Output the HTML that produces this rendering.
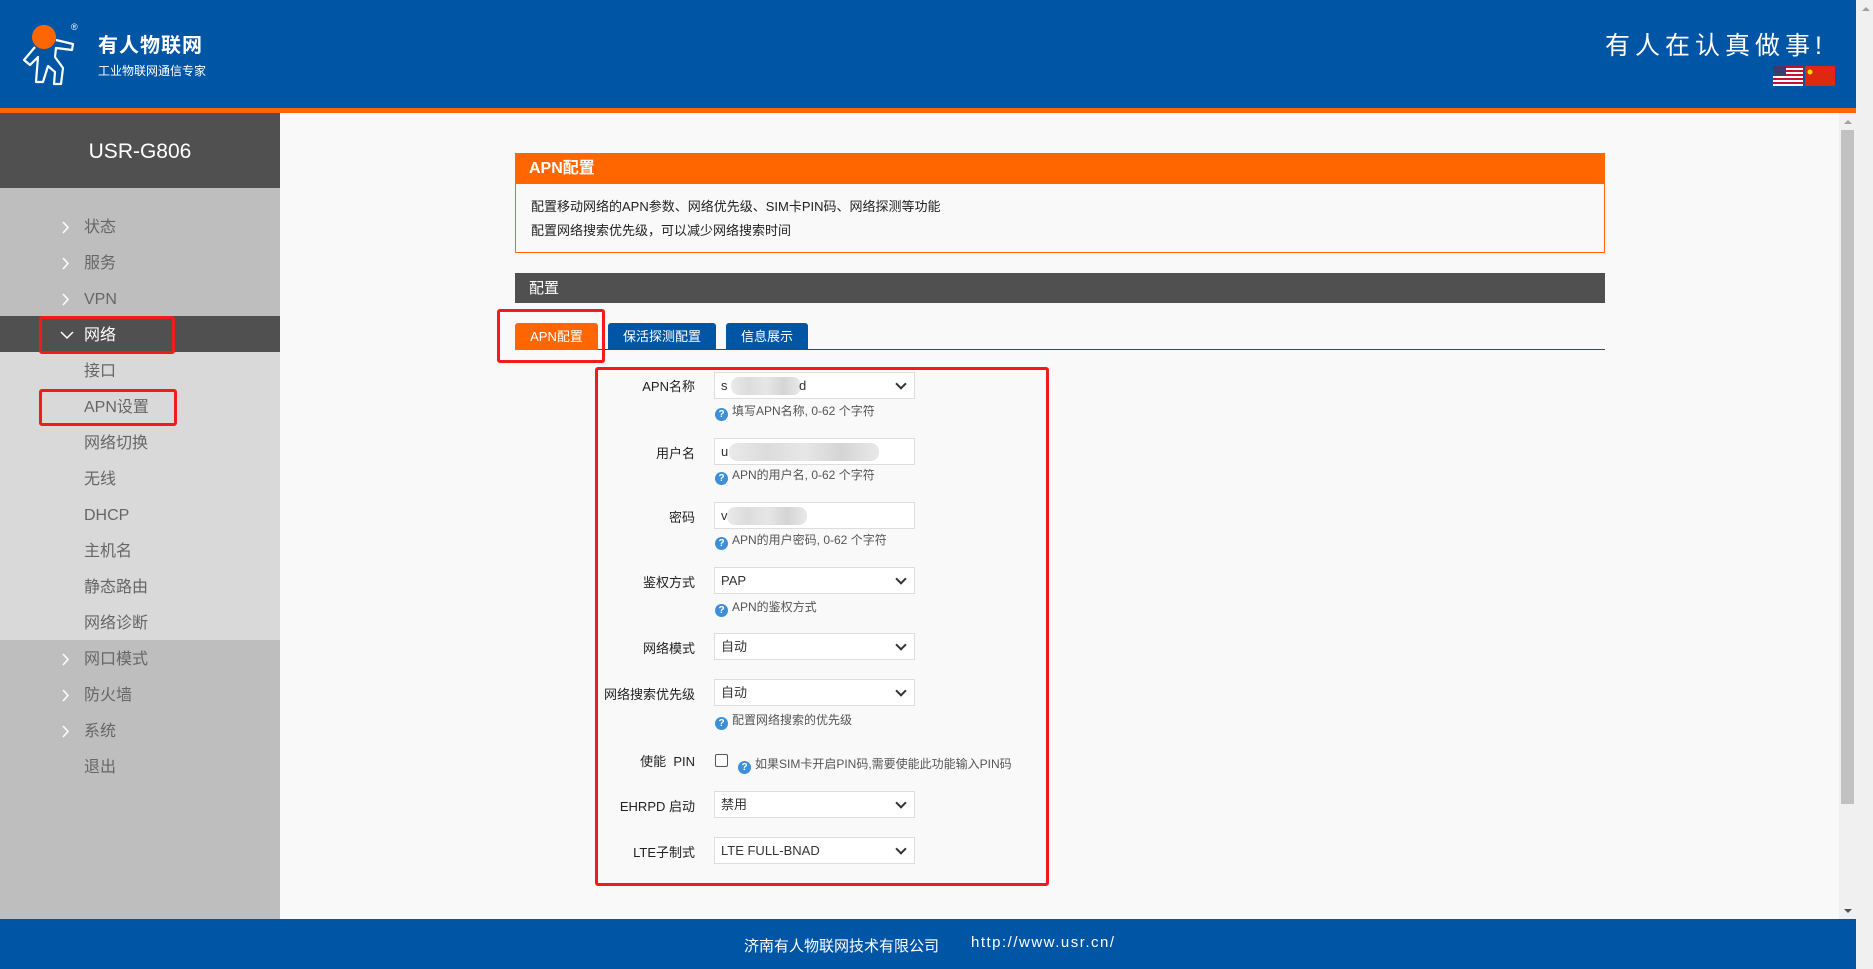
<!DOCTYPE html>
<html><head><meta charset="utf-8"><style>
*{margin:0;padding:0;box-sizing:border-box}
body{width:1873px;height:969px;position:relative;overflow:hidden;background:#f9f9f9;font-family:"Liberation Sans","Noto Sans CJK SC",sans-serif;}
.a{position:absolute}
#hdr{left:0;top:0;width:1856px;height:108px;background:#0055a5}
#ob{left:0;top:108px;width:1856px;height:5px;background:#ff6600}
#side{left:0;top:113px;width:280px;height:806px;background:#bebebe}
#stop{left:0;top:113px;width:280px;height:75px;background:#505050;color:#fff;font-size:21px;text-align:center;line-height:78px}
.mi{position:absolute;left:0;width:280px;height:36px;line-height:40px;font-size:16px;color:#666;padding-left:84px}
.mi svg{position:absolute;left:62px;top:13px}
.red{position:absolute;border:3px solid #f21a1a;border-radius:3px}
#foot{left:0;top:919px;width:1856px;height:50px;background:#0055a5;color:#fff;font-size:15px}
.lbl{position:absolute;right:1178px;font-size:13px;color:#222;text-align:right;white-space:nowrap}
.inp{position:absolute;left:714px;width:201px;height:27px;background:#fff;border:1px solid #ddd;font-size:13px;color:#333;padding-left:6px;line-height:25px}
.inp.s::after{content:"";position:absolute;right:9px;top:7px;width:6px;height:6px;border-right:2px solid #333;border-bottom:2px solid #333;transform:rotate(45deg)}
.hp{position:absolute;font-size:12px;color:#555;white-space:nowrap}
.q{display:inline-block;width:13px;height:13px;border-radius:50%;background:#3d8fd8;color:#fff;font-size:10px;line-height:13px;text-align:center;vertical-align:-2px;margin-right:4px;font-weight:bold}
.blur{position:absolute;top:4px;height:18px;background:linear-gradient(90deg,#e8e8e8,#d8d8d8,#e4e4e4,#d0d0d0,#e6e6e6);border-radius:8px;opacity:.9}
</style></head><body>
<div class="a" id="hdr"></div>
<div class="a" id="ob"></div>
<svg class="a" style="left:20px;top:20px" width="66" height="70" viewBox="0 0 66 70">
<circle cx="24" cy="17" r="12" fill="#ff6600"/>
<path d="M15 27 L4 40 L10 45 L18 37 L16 62 L23 62 L28 46 L35 52 L34 64 L41 64 L43 48 L35 37 L36 28 L52 30 L53 24 L36 20" fill="none" stroke="#fff" stroke-width="2.2" stroke-linejoin="round"/>
<text x="51" y="10" fill="#fff" font-size="9" font-family="Liberation Sans">®</text>
</svg>
<div class="a" style="left:98px;top:29px;color:#fff;font-size:20px;font-weight:bold;letter-spacing:1px">有人物联网</div>
<div class="a" style="left:98px;top:62px;color:#fff;font-size:12px">工业物联网通信专家</div>
<div class="a" style="left:1605px;top:26px;color:#fff;font-size:25px;letter-spacing:5px">有人在认真做事!</div>
<svg class="a" style="left:1773px;top:66px" width="62" height="20">
<rect x="0" y="0" width="30" height="20" fill="#fff"/>
<g fill="#c8102e"><rect y="0" width="30" height="2"/><rect y="4" width="30" height="2"/><rect y="8" width="30" height="2"/><rect y="12" width="30" height="2"/><rect y="16" width="30" height="2"/></g>
<rect x="0" y="0" width="13" height="10" fill="#3c3b6e"/>
<rect x="32" y="0" width="30" height="20" fill="#de2910"/>
<circle cx="37" cy="6" r="2.5" fill="#ffde00"/>
</svg>
<div class="a" style="left:1856px;top:0;width:17px;height:969px;background:#f0f0f0"></div>
<div class="a" style="left:1862px;top:7px;border-left:4px solid transparent;border-right:4px solid transparent;border-bottom:4px solid #a0a0a0"></div>
<div class="a" style="left:1839px;top:113px;width:17px;height:806px;background:#f0f0f0"></div>
<div class="a" style="left:1841px;top:130px;width:13px;height:674px;background:#c1c1c1"></div>
<div class="a" style="left:1844px;top:120px;border-left:4px solid transparent;border-right:4px solid transparent;border-bottom:4px solid #a0a0a0"></div>
<div class="a" style="left:1844px;top:909px;border-left:4px solid transparent;border-right:4px solid transparent;border-top:4px solid #505050"></div>
<div class="a" id="side"></div>
<div class="a" id="stop">USR-G806</div>
<div class="a" style="left:0;top:352px;width:280px;height:288px;background:#d9d9d9"></div>
<div class="a" style="left:0;top:316px;width:280px;height:36px;background:#505050"></div>
<div class="mi" style="top:208px"><svg width="8" height="13"><path d="M1 1 L6 6.5 L1 12" fill="none" stroke="#fff" stroke-width="1.5"/></svg>状态</div>
<div class="mi" style="top:244px"><svg width="8" height="13"><path d="M1 1 L6 6.5 L1 12" fill="none" stroke="#fff" stroke-width="1.5"/></svg>服务</div>
<div class="mi" style="top:280px"><svg width="8" height="13"><path d="M1 1 L6 6.5 L1 12" fill="none" stroke="#fff" stroke-width="1.5"/></svg>VPN</div>
<div class="mi" style="top:316px;color:#fff"><svg width="14" height="9" style="left:60px;top:15px"><path d="M1 1 L7 7 L13 1" fill="none" stroke="#fff" stroke-width="1.5"/></svg>网络</div>
<div class="mi" style="top:352px">接口</div>
<div class="mi" style="top:388px">APN设置</div>
<div class="mi" style="top:424px">网络切换</div>
<div class="mi" style="top:460px">无线</div>
<div class="mi" style="top:496px">DHCP</div>
<div class="mi" style="top:532px">主机名</div>
<div class="mi" style="top:568px">静态路由</div>
<div class="mi" style="top:604px">网络诊断</div>
<div class="mi" style="top:640px"><svg width="8" height="13"><path d="M1 1 L6 6.5 L1 12" fill="none" stroke="#fff" stroke-width="1.5"/></svg>网口模式</div>
<div class="mi" style="top:676px"><svg width="8" height="13"><path d="M1 1 L6 6.5 L1 12" fill="none" stroke="#fff" stroke-width="1.5"/></svg>防火墙</div>
<div class="mi" style="top:712px"><svg width="8" height="13"><path d="M1 1 L6 6.5 L1 12" fill="none" stroke="#fff" stroke-width="1.5"/></svg>系统</div>
<div class="mi" style="top:748px">退出</div>
<div class="red" style="left:39px;top:316px;width:136px;height:38px"></div>
<div class="red" style="left:39px;top:389px;width:138px;height:37px"></div>
<div class="a" style="left:515px;top:153px;width:1090px;height:100px;border:1px solid #ff6600;background:#f9f9f9"></div>
<div class="a" style="left:515px;top:153px;width:1090px;height:31px;background:#ff6600;color:#fff;font-size:16px;font-weight:bold;line-height:31px;padding-left:14px">APN配置</div>
<div class="a" style="left:531px;top:195px;font-size:13px;color:#222;line-height:24px">配置移动网络的APN参数、网络优先级、SIM卡PIN码、网络探测等功能<br>配置网络搜索优先级，可以减少网络搜索时间</div>
<div class="a" style="left:515px;top:273px;width:1090px;height:30px;background:#505050;color:#fff;font-size:15px;line-height:32px;padding-left:14px">配置</div>
<div class="a" style="left:515px;top:349px;width:1090px;height:1px;background:#0055a5"></div>
<div class="a" style="left:515px;top:323px;width:83px;height:27px;background:#ff6600;color:#fff;font-size:13px;text-align:center;line-height:27px;border-radius:3px 3px 0 0">APN配置</div>
<div class="a" style="left:608px;top:323px;width:108px;height:27px;background:#0055a5;color:#fff;font-size:13px;text-align:center;line-height:27px;border-radius:3px 3px 0 0">保活探测配置</div>
<div class="a" style="left:726px;top:323px;width:82px;height:27px;background:#0055a5;color:#fff;font-size:13px;text-align:center;line-height:27px;border-radius:3px 3px 0 0">信息展示</div>
<div class="red" style="left:497px;top:309px;width:108px;height:54px"></div>
<div class="red" style="left:595px;top:367px;width:454px;height:519px"></div>
<div class="lbl" style="top:376px">APN名称</div>
<div class="inp s" style="top:372px">s<div class="blur" style="left:16px;width:70px"></div><span style="position:absolute;left:84px">d</span></div>
<div class="hp" style="left:715px;top:402px"><span class="q">?</span>填写APN名称, 0-62 个字符</div>
<div class="lbl" style="top:443px">用户名</div>
<div class="inp" style="top:438px">u<div class="blur" style="left:14px;width:150px"></div></div>
<div class="hp" style="left:715px;top:466px"><span class="q">?</span>APN的用户名, 0-62 个字符</div>
<div class="lbl" style="top:507px">密码</div>
<div class="inp" style="top:502px">v<div class="blur" style="left:12px;width:80px"></div></div>
<div class="hp" style="left:715px;top:531px"><span class="q">?</span>APN的用户密码, 0-62 个字符</div>
<div class="lbl" style="top:572px">鉴权方式</div>
<div class="inp s" style="top:567px">PAP</div>
<div class="hp" style="left:715px;top:598px"><span class="q">?</span>APN的鉴权方式</div>
<div class="lbl" style="top:638px">网络模式</div>
<div class="inp s" style="top:633px">自动</div>
<div class="lbl" style="top:684px">网络搜索优先级</div>
<div class="inp s" style="top:679px">自动</div>
<div class="hp" style="left:715px;top:711px"><span class="q">?</span>配置网络搜索的优先级</div>
<div class="lbl" style="top:751px">使能&nbsp; PIN</div>
<div class="a" style="left:715px;top:754px;width:13px;height:13px;border:1px solid #555;border-radius:2px;background:#fff"></div>
<div class="hp" style="left:738px;top:755px"><span class="q">?</span>如果SIM卡开启PIN码,需要使能此功能输入PIN码</div>
<div class="lbl" style="top:796px">EHRPD 启动</div>
<div class="inp s" style="top:791px">禁用</div>
<div class="lbl" style="top:842px">LTE子制式</div>
<div class="inp s" style="top:837px">LTE FULL-BNAD</div>
<div class="a" id="foot"><span class="a" style="left:744px;top:16px">济南有人物联网技术有限公司</span><span class="a" style="left:971px;top:15px;letter-spacing:1.5px">http://www.usr.cn/</span></div>
</body></html>
